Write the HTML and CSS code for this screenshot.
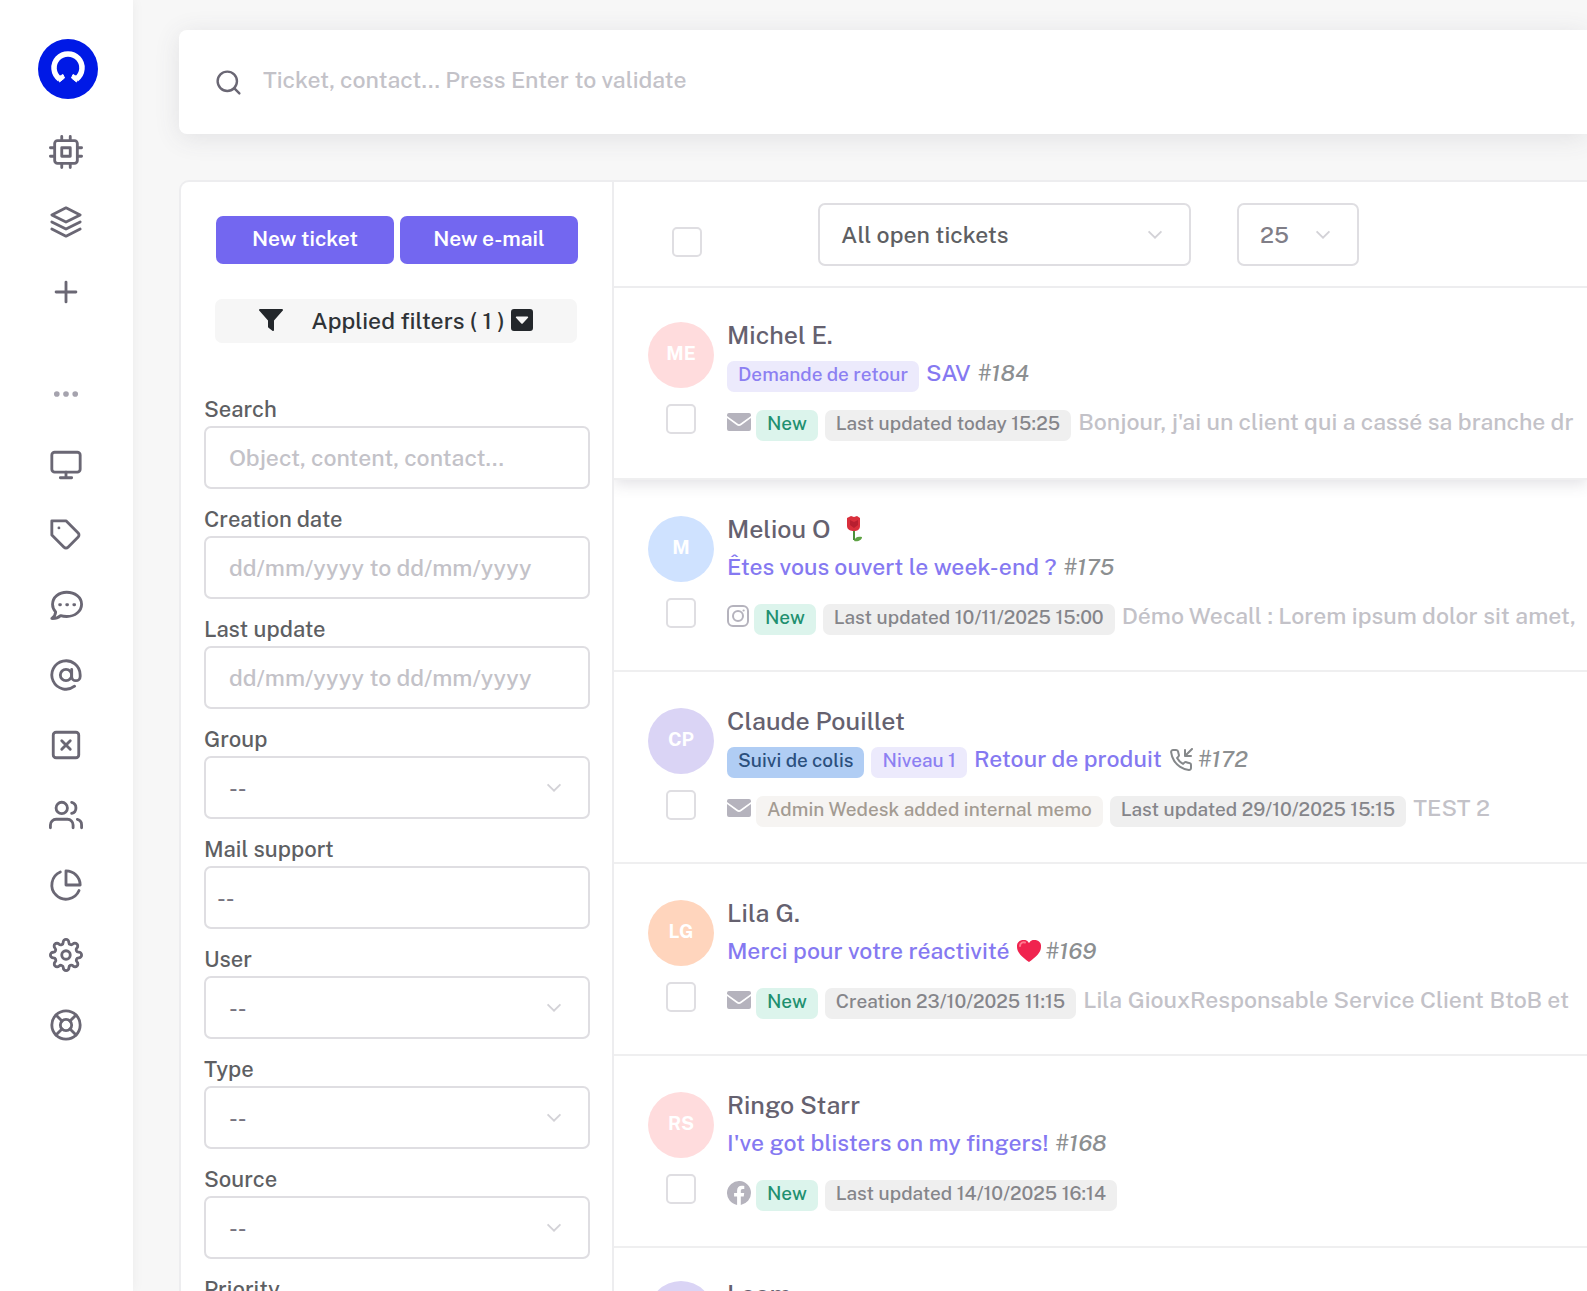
FILE: index.html
```html
<!DOCTYPE html>
<html lang="en">

<head>
  <meta charset="UTF-8">
  <meta name="viewport" content="width=device-width, initial-scale=1">
  <title>Tickets</title>
  <link rel="stylesheet" href="styles.css">
</head>

<body>
  <!-- shared icons -->
  <svg class="sprite" aria-hidden="true">
    <symbol id="i-chevron" viewBox="0 0 24 24">
      <polyline points="5 8 12 15 19 8" />
    </symbol>
    <symbol id="i-mail" viewBox="0 0 24 18">
      <path d="M2 0h20a2 2 0 0 1 2 2v1L13.5 10.600a2.500 2.500 0 0 1-3 0L0 3V2a2 2 0 0 1 2-2z" />
      <path d="M0 5l9.500 7a4 4 0 0 0 5 0L24 5v11a2 2 0 0 1-2 2H2a2 2 0 0 1-2-2z" />
    </symbol>
  </svg>

  <div class="app">
    <nav class="sidebar">
      <a class="logo" href="#" aria-label="Home">
        <svg viewBox="0 0 60 60">
          <circle cx="30" cy="30" r="30" fill="#0019e6" />
          <path d="M21.500 40 A14 14 0 1 1 38.500 40" fill="none" stroke="#fff" stroke-width="5.500" />
          <path d="M19.500 38.500l5.500-3 1.500 3.500-5 4z M40.500 38.500l-5.500-3-1.500 3.500 5 4z" fill="#fff" stroke="#fff" stroke-linejoin="round" />
        </svg>
      </a>
      <ul class="nav-list">
        <li><a href="#" aria-label="Dashboard"><svg viewBox="0 0 24 24"><rect x="4" y="4" width="16" height="16" rx="2" /><rect x="9" y="9" width="6" height="6" /><path d="M9 1v3M15 1v3M9 20v3M15 20v3M20 9h3M20 15h3M1 9h3M1 15h3" /></svg></a></li>
        <li><a href="#" aria-label="Tickets"><svg viewBox="0 0 24 24"><path d="M12 2L2 7l10 5 10-5z" /><path d="M2 17l10 5 10-5M2 12l10 5 10-5" /></svg></a></li>
        <li><a href="#" aria-label="Add"><svg viewBox="0 0 24 24"><path d="M12 5v14M5 12h14" /></svg></a></li>
        <li class="nav-more"><svg viewBox="0 0 24 24"><circle cx="12" cy="12" r="1" /><circle cx="18.500" cy="12" r="1" /><circle cx="5.500" cy="12" r="1" /></svg></li>
        <li><a href="#" aria-label="Screen"><svg viewBox="0 0 24 24"><rect x="2" y="3" width="20" height="14" rx="2" /><path d="M8 21h8M12 17v4" /></svg></a></li>
        <li><a href="#" aria-label="Tags"><svg viewBox="0 0 24 24"><path d="M20.590 13.410l-7.170 7.170a2 2 0 0 1-2.830 0L2 12V2h10l8.590 8.590a2 2 0 0 1 0 2.820z" /><path d="M7 7h.01" /></svg></a></li>
        <li><a href="#" aria-label="Chat"><svg viewBox="0 0 24 24"><path d="M12.500 3C7 3 2.500 6.500 2.500 11.500c0 2.200.9 4 2.200 5.400C4.600 18.800 3.400 20.600 2 21.500c2.500.1 4.700-.7 6.200-2 1.300.4 2.800.6 4.300.6 5.800 0 10.500-3.700 10.500-8.600S18.300 3 12.500 3z" /><path d="M7.500 11.800h.6M12.500 11.800h.6M17.500 11.800h.6" class="dots" /></svg></a></li>
        <li><a href="#" aria-label="Mail"><svg viewBox="0 0 24 24"><circle cx="12" cy="12" r="4" /><path d="M16 8v5a3 3 0 0 0 6 0v-1a10 10 0 1 0-3.920 7.940" /></svg></a></li>
        <li><a href="#" aria-label="Closed"><svg viewBox="0 0 24 24"><rect x="3" y="3" width="18" height="18" rx="2" /><path d="M9 9l6 6M15 9l-6 6" /></svg></a></li>
        <li><a href="#" aria-label="Contacts"><svg viewBox="0 0 24 24"><path d="M17 21v-2a4 4 0 0 0-4-4H5a4 4 0 0 0-4 4v2" /><circle cx="9" cy="7" r="4" /><path d="M23 21v-2a4 4 0 0 0-3-3.870M16 3.130a4 4 0 0 1 0 7.750" /></svg></a></li>
        <li><a href="#" aria-label="Statistics"><svg viewBox="0 0 24 24"><path d="M21.210 15.890A10 10 0 1 1 8 2.830" /><path d="M22 12A10 10 0 0 0 12 2v10z" /></svg></a></li>
        <li><a href="#" aria-label="Settings"><svg viewBox="0 0 24 24"><circle cx="12" cy="12" r="3" /><path d="M19.400 15a1.650 1.650 0 0 0 .33 1.820l.06.06a2 2 0 0 1 0 2.830 2 2 0 0 1-2.830 0l-.06-.06a1.650 1.650 0 0 0-1.820-.33 1.650 1.650 0 0 0-1 1.510V21a2 2 0 0 1-2 2 2 2 0 0 1-2-2v-.09A1.650 1.650 0 0 0 9 19.400a1.650 1.650 0 0 0-1.820.33l-.06.06a2 2 0 0 1-2.830 0 2 2 0 0 1 0-2.830l.06-.06a1.650 1.650 0 0 0 .33-1.820 1.650 1.650 0 0 0-1.510-1H3a2 2 0 0 1-2-2 2 2 0 0 1 2-2h.09A1.650 1.650 0 0 0 4.600 9a1.650 1.650 0 0 0-.33-1.820l-.06-.06a2 2 0 0 1 0-2.830 2 2 0 0 1 2.830 0l.06.06a1.650 1.650 0 0 0 1.820.33H9a1.650 1.650 0 0 0 1-1.510V3a2 2 0 0 1 2-2 2 2 0 0 1 2 2v.09a1.650 1.650 0 0 0 1 1.510 1.650 1.650 0 0 0 1.820-.33l.06-.06a2 2 0 0 1 2.830 0 2 2 0 0 1 0 2.830l-.06.06a1.650 1.650 0 0 0-.33 1.820V9a1.650 1.650 0 0 0 1.510 1H21a2 2 0 0 1 2 2 2 2 0 0 1-2 2h-.09a1.650 1.650 0 0 0-1.510 1z" /></svg></a></li>
        <li><a href="#" aria-label="Help"><svg viewBox="0 0 24 24"><circle cx="12" cy="12" r="10" /><circle cx="12" cy="12" r="4" /><path d="M4.930 4.930l4.240 4.240M14.830 14.830l4.240 4.240M14.830 9.170l4.240-4.240M4.930 19.070l4.240-4.240" /></svg></a></li>
      </ul>
    </nav>

    <main class="main">
      <div class="topbar">
        <svg class="search-icon" viewBox="0 0 24 24"><circle cx="11" cy="11" r="8" /><path d="M21 21l-4.350-4.350" /></svg>
        <input class="top-search" type="text" aria-label="Global search" placeholder="Ticket, contact... Press Enter to validate">
      </div>

      <div class="panel">
        <aside class="filters">
          <div class="actions">
            <button class="btn" type="button">New ticket</button>
            <button class="btn" type="button">New e-mail</button>
          </div>
          <button class="applied" type="button">
            <svg class="funnel" viewBox="0 0 24 22"><path d="M1 0h22a1 1 0 0 1 .8 1.600L15 11.500V21a1 1 0 0 1-1.600.8l-3.900-3a1.500 1.500 0 0 1-.5-1.200v-6.100L.2 1.600A1 1 0 0 1 1 0z" /></svg>
            <span>Applied filters ( 1 )</span>
            <svg class="caret" viewBox="0 0 22 22"><path fill-rule="evenodd" d="M3 0h16a3 3 0 0 1 3 3v16a3 3 0 0 1-3 3H3a3 3 0 0 1-3-3V3a3 3 0 0 1 3-3zM5.500 7.500a.8.8 0 0 0-.5 1.300l5.300 5.700a1 1 0 0 0 1.400 0L17 8.800a.8.8 0 0 0-.5-1.300z" /></svg>
          </button>

          <form class="fields">
            <label for="f-search">Search</label>
            <input class="field" id="f-search" type="text" placeholder="Object, content, contact...">

            <label for="f-created">Creation date</label>
            <input class="field" id="f-created" type="text" placeholder="dd/mm/yyyy to dd/mm/yyyy">

            <label for="f-updated">Last update</label>
            <input class="field" id="f-updated" type="text" placeholder="dd/mm/yyyy to dd/mm/yyyy">

            <label for="f-group">Group</label>
            <div class="select">
              <select class="field" id="f-group"><option>--</option></select>
              <svg class="chevron"><use href="#i-chevron" /></svg>
            </div>

            <label for="f-mail">Mail support</label>
            <select class="field field-tight" id="f-mail"><option>--</option></select>

            <label for="f-user">User</label>
            <div class="select">
              <select class="field" id="f-user"><option>--</option></select>
              <svg class="chevron"><use href="#i-chevron" /></svg>
            </div>

            <label for="f-type">Type</label>
            <div class="select">
              <select class="field" id="f-type"><option>--</option></select>
              <svg class="chevron"><use href="#i-chevron" /></svg>
            </div>

            <label for="f-source">Source</label>
            <div class="select">
              <select class="field" id="f-source"><option>--</option></select>
              <svg class="chevron"><use href="#i-chevron" /></svg>
            </div>

            <label for="f-priority">Priority</label>
            <div class="select">
              <select class="field" id="f-priority"><option>--</option></select>
              <svg class="chevron"><use href="#i-chevron" /></svg>
            </div>
          </form>
        </aside>

        <section class="tickets">
          <div class="toolbar">
            <input class="check" type="checkbox" aria-label="Select all tickets">
            <div class="select select-view">
              <select class="field" aria-label="View"><option>All open tickets</option></select>
              <svg class="chevron"><use href="#i-chevron" /></svg>
            </div>
            <div class="select select-count">
              <select class="field" aria-label="Tickets per page"><option>25</option></select>
              <svg class="chevron"><use href="#i-chevron" /></svg>
            </div>
          </div>

          <article class="ticket ticket-active">
            <div class="ticket-side">
              <span class="avatar red">ME</span>
              <input class="check" type="checkbox" aria-label="Select ticket 184">
            </div>
            <div class="ticket-body">
              <h2 class="name">Michel E.</h2>
              <div class="subject"><span class="badge violet">Demande de retour</span><a href="#">SAV</a><em>#184</em></div>
              <div class="meta"><svg class="mail"><use href="#i-mail" /></svg><span class="badge green">New</span><span class="badge grey">Last updated today 15:25</span><span class="preview">Bonjour, j'ai un client qui a cassé sa branche dr</span></div>
            </div>
          </article>

          <article class="ticket">
            <div class="ticket-side">
              <span class="avatar blue">M</span>
              <input class="check" type="checkbox" aria-label="Select ticket 175">
            </div>
            <div class="ticket-body">
              <h2 class="name">Meliou O
                <svg class="rose" viewBox="0 0 18 26"><path d="M9 13v11" stroke="#4d8f3a" stroke-width="2" fill="none" /><path d="M9 25c1-4 4-5 8-4 0 3-4 5-8 4z" fill="#5fa345" /><path d="M2 2l4-2 3 1 3-1 3 2v8c0 4-3 5-6 5s-7-1-7-5z" fill="#d92f3c" /><path d="M5 4l4 2 4-2v5l-4 3-4-3z" fill="#b81f30" /></svg>
              </h2>
              <div class="subject"><a href="#">Êtes vous ouvert le week-end ?</a><em>#175</em></div>
              <div class="meta"><svg class="insta" viewBox="0 0 22 22"><rect x="1" y="1" width="20" height="20" rx="5" /><circle cx="11" cy="11" r="5" /><path d="M16.500 5.400h.2" /></svg><span class="badge green">New</span><span class="badge grey">Last updated 10/11/2025 15:00</span><span class="preview">Démo Wecall : Lorem ipsum dolor sit amet,</span></div>
            </div>
          </article>

          <article class="ticket">
            <div class="ticket-side">
              <span class="avatar purple">CP</span>
              <input class="check" type="checkbox" aria-label="Select ticket 172">
            </div>
            <div class="ticket-body">
              <h2 class="name">Claude Pouillet</h2>
              <div class="subject"><span class="badge sky">Suivi de colis</span><span class="badge violet">Niveau 1</span><a href="#">Retour de produit</a><svg class="call" viewBox="0 0 24 24"><path d="M16 2v6h6M23 1l-7 7" /><path d="M22 16.920v3a2 2 0 0 1-2.180 2 19.790 19.790 0 0 1-8.630-3.070 19.500 19.500 0 0 1-6-6 19.790 19.790 0 0 1-3.070-8.670A2 2 0 0 1 4.110 2h3a2 2 0 0 1 2 1.720c.13.960.36 1.900.7 2.810a2 2 0 0 1-.45 2.110L8.090 9.910a16 16 0 0 0 6 6l1.270-1.270a2 2 0 0 1 2.110-.45c.91.34 1.850.57 2.810.7A2 2 0 0 1 22 16.920z" /></svg><em>#172</em></div>
              <div class="meta"><svg class="mail"><use href="#i-mail" /></svg><span class="badge sand">Admin Wedesk added internal memo</span><span class="badge grey">Last updated 29/10/2025 15:15</span><span class="preview">TEST 2</span></div>
            </div>
          </article>

          <article class="ticket">
            <div class="ticket-side">
              <span class="avatar orange">LG</span>
              <input class="check" type="checkbox" aria-label="Select ticket 169">
            </div>
            <div class="ticket-body">
              <h2 class="name">Lila G.</h2>
              <div class="subject"><a href="#">Merci pour votre réactivité</a><svg class="heart" viewBox="0 0 24 22"><path d="M12 22C5 17 0 12.500 0 7a6.500 6.500 0 0 1 12-4A6.500 6.500 0 0 1 24 7c0 5.500-5 10-12 15z" fill="#f0244f" /><path d="M3 6c0-3 3-4.500 5-3.500" fill="none" stroke="#ff7a8e" stroke-width="2" stroke-linecap="round" /></svg><em>#169</em></div>
              <div class="meta"><svg class="mail"><use href="#i-mail" /></svg><span class="badge green">New</span><span class="badge grey">Creation 23/10/2025 11:15</span><span class="preview">Lila GiouxResponsable Service Client BtoB et</span></div>
            </div>
          </article>

          <article class="ticket">
            <div class="ticket-side">
              <span class="avatar red">RS</span>
              <input class="check" type="checkbox" aria-label="Select ticket 168">
            </div>
            <div class="ticket-body">
              <h2 class="name">Ringo Starr</h2>
              <div class="subject"><a href="#">I've got blisters on my fingers!</a><em>#168</em></div>
              <div class="meta"><svg class="facebook" viewBox="0 0 24 24"><path d="M24 12a12 12 0 1 0-13.900 11.900v-8.400H7.100V12h3V9.400c0-3 1.800-4.700 4.500-4.700 1.300 0 2.700.2 2.700.2v3h-1.500c-1.500 0-2 .9-2 1.900V12h3.400l-.5 3.500h-2.900v8.400A12 12 0 0 0 24 12z" /></svg><span class="badge green">New</span><span class="badge grey">Last updated 14/10/2025 16:14</span></div>
            </div>
          </article>

          <article class="ticket">
            <div class="ticket-side">
              <span class="avatar purple"></span>
            </div>
            <div class="ticket-body">
              <h2 class="name">Loom</h2>
            </div>
          </article>
        </section>
      </div>
    </main>
  </div>
</body>

</html>
```
FILE: styles.css
```css
* {
  box-sizing: border-box;
}

body {
  margin: 0;
  height: 100vh;
  overflow: hidden;
  background-color: #f7f7f7;
  color: #65616f;
  font-family: "Public Sans", Inter, sans-serif;
  font-size: 23px;
  font-weight: 500;
}

.sprite {
  display: none;
}

.app {
  display: flex;
  height: 100vh;
}

/* sidebar */
.sidebar {
  flex: 0 0 133px;
  padding-top: 39px;
  background-color: #fff;
  box-shadow: 0 0 12px rgba(0, 0, 0, 0.05);
}

.logo {
  display: block;
  width: 60px;
  height: 60px;
  margin-left: 38px;
}

.nav-list {
  display: flex;
  flex-direction: column;
  align-items: center;
  gap: 36px;
  margin: 36px 0 0;
  padding: 0 2px 0 0;
  list-style: none;
}

.nav-list a,
.nav-list svg {
  display: block;
}

.nav-list svg {
  width: 34px;
  height: 34px;
  fill: none;
  stroke: #6a6774;
  stroke-width: 2;
  stroke-linecap: round;
  stroke-linejoin: round;
}

.nav-list .nav-more {
  margin: 32px 0 1px;
}

.nav-more svg {
  stroke: #a5a3ae;
}

/* main area */
.main {
  flex: 1;
  min-width: 0;
  display: flex;
  flex-direction: column;
  gap: 46px;
  padding: 30px 0 0 46px;
  overflow: hidden;
}

.topbar {
  flex: none;
  display: flex;
  align-items: center;
  gap: 20px;
  height: 104px;
  padding: 0 35px;
  background-color: #fff;
  border-radius: 8px 0 0 8px;
  box-shadow: 0 4px 26px rgba(75, 70, 92, 0.12);
}

.search-icon {
  width: 29px;
  height: 29px;
  fill: none;
  stroke: #6a6774;
  stroke-width: 2;
  stroke-linecap: round;
}

.top-search {
  flex: 1;
  padding: 0 0 5px;
  border: 0;
  outline: 0;
  font: inherit;
  color: inherit;
}

::placeholder {
  color: #c3c2c8;
  opacity: 1;
}

.panel {
  flex: 1;
  min-height: 0;
  display: flex;
  background-color: #fff;
  border: 2px solid #ededef;
  border-width: 2px 0 0 2px;
  border-radius: 10px 0 0 0;
  overflow: hidden;
}

/* filters */
.filters {
  flex: 0 0 433px;
  padding: 34px 22px 0 23px;
  border-right: 2px solid #ededef;
}

.actions {
  display: flex;
  gap: 6px;
  padding: 0 12px;
}

.btn {
  flex: 1;
  height: 48px;
  border: 0;
  border-radius: 7px;
  background-color: #7367f0;
  color: #fff;
  font: 600 21px/46px "Public Sans", Inter, sans-serif;
  padding: 0 0 2px;
  cursor: pointer;
}

.applied {
  display: flex;
  align-items: center;
  justify-content: center;
  width: 362px;
  height: 44px;
  margin: 35px 0 0 11px;
  padding: 0 0 2px;
  border: 0;
  border-radius: 7px;
  background-color: #f6f6f6;
  color: #2f3337;
  font: inherit;
  cursor: pointer;
}

.applied svg {
  fill: #23272b;
  height: 22px;
}

.funnel {
  width: 24px;
  margin-right: 28px;
}

.caret {
  width: 22px;
  margin-left: 6px;
}

.fields {
  display: flex;
  flex-direction: column;
  margin-top: 51px;
}

.fields label {
  margin-bottom: 2px;
  line-height: 30px;
  font-size: 22px;
  color: #5e5f63;
}

.field {
  appearance: none;
  width: 100%;
  height: 63px;
  margin: 0 0 15px;
  padding: 0 23px;
  border: 2px solid #dfdee2;
  border-radius: 7px;
  background-color: #fff;
  color: #77747f;
  font: inherit;
}

.field-tight {
  padding: 0 11px;
}

.select {
  display: grid;
  align-items: start;
}

.select .field,
.chevron {
  grid-area: 1 / 1;
}

.chevron {
  justify-self: end;
  width: 22px;
  height: 22px;
  margin: 21px 25px 0 0;
  fill: none;
  stroke: #d3d2d7;
  stroke-width: 2;
  pointer-events: none;
}

/* ticket list */
.tickets {
  flex: 1;
  min-width: 0;
}

.toolbar {
  display: flex;
  align-items: center;
  height: 106px;
  padding: 0 58px;
  border-bottom: 2px solid #ededef;
}

.toolbar .field {
  margin: 0;
  padding: 0 21px;
  color: #5e5f63;
}

.toolbar .check {
  margin-top: 16px;
}

.select-view {
  width: 373px;
  margin-left: 116px;
}

.select-count {
  width: 122px;
  margin-left: 46px;
}

.toolbar .select-count .field {
  color: #807e87;
}

.check {
  appearance: none;
  flex: none;
  width: 30px;
  height: 30px;
  margin: 0;
  border: 2px solid #dfdee2;
  border-radius: 5px;
  background-color: #fff;
}

.ticket {
  display: flex;
  gap: 13px;
  height: 192px;
  padding: 36px 0 0 34px;
  border-bottom: 2px solid #efeff0;
}

.ticket:last-child {
  padding-top: 33px;
}

/* the shadow only shows under the row */
.ticket-active {
  padding-top: 34px;
  box-shadow: 0 4px 14px rgba(75, 70, 92, 0.16);
  clip-path: inset(0 0 -24px 0);
}

.ticket-side {
  flex: none;
  display: flex;
  flex-direction: column;
  align-items: center;
  gap: 16px;
  width: 66px;
}

.avatar {
  width: 66px;
  height: 66px;
  border-radius: 50%;
  color: #fff;
  font-weight: 700;
  font-size: 19px;
  line-height: 62px;
  text-align: center;
}

.avatar.red { background-color: #ffdcdd; }
.avatar.blue { background-color: #cfe2ff; }
.avatar.purple { background-color: #dad4f5; }
.avatar.orange { background-color: #ffd5bd; }

.ticket-body {
  flex: 1;
  min-width: 0;
}

.name {
  height: 26px;
  margin: 0;
  font-size: 25px;
  font-weight: 500;
  line-height: 26px;
}

.subject,
.meta {
  display: flex;
  align-items: flex-start;
  gap: 7px;
  height: 32px;
  line-height: 28px;
  white-space: nowrap;
}

.subject {
  margin-top: 11px;
}

.meta {
  margin-top: 17px;
}

.subject a {
  color: #8579f1;
  text-decoration: none;
}

.subject em {
  color: #8c8f91;
}

.badge {
  height: 31px;
  margin-top: 2px;
  padding: 0 11px;
  border-radius: 7px;
  font-size: 19px;
  line-height: 27px;
}

.badge.violet { background-color: #eceafc; color: #8c80f2; }
.badge.sky { background-color: #b0cdf4; color: #2b4f7d; }
.badge.green { background-color: #dcf4ec; color: #1f9070; }
.badge.grey { background-color: #efefef; color: #85858a; }
.badge.sand { background-color: #f6f4f2; color: #a39b92; }

.preview {
  color: #c3c2c8;
}

.meta svg,
.subject svg {
  flex: none;
  margin-top: 3px;
  margin-right: -2px;
}

.meta svg {
  fill: #b5b3bd;
}

.meta .mail {
  width: 24px;
  height: 18px;
  margin-top: 5px;
}

.meta .insta {
  width: 22px;
  height: 22px;
  fill: none;
  stroke: #b5b3bd;
  stroke-width: 2;
  stroke-linecap: round;
}

.meta .facebook {
  width: 24px;
  height: 24px;
}

.call {
  width: 24px;
  height: 24px;
  fill: none;
  stroke: #85888a;
  stroke-width: 2;
  stroke-linecap: round;
  stroke-linejoin: round;
}

.heart {
  width: 24px;
  height: 22px;
}

.rose {
  width: 18px;
  height: 26px;
  margin-left: 8px;
  vertical-align: -4px;
}
```
